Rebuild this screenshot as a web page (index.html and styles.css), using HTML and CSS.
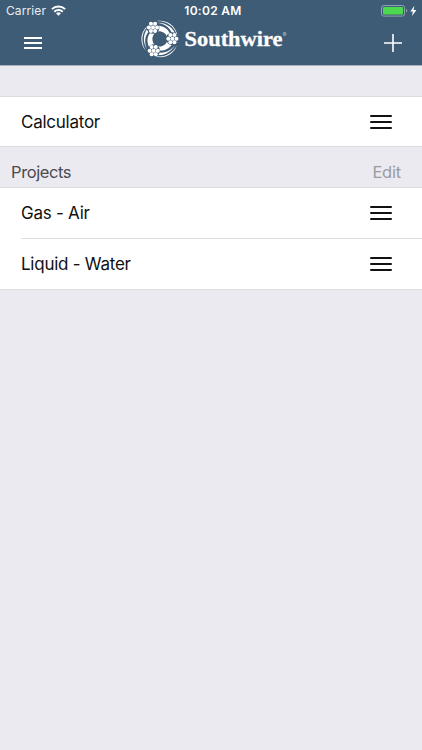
FILE: index.html
```html
<!DOCTYPE html>
<html lang="en">

<head>
    <meta charset="UTF-8">
    <meta name="viewport" content="width=device-width, initial-scale=1.0">
    <title>Southwire</title>
    <link rel="stylesheet" href="styles.css">
</head>

<body>
    <header class="header">
        <div class="status">
            <div class="carrier">
                <span>Carrier</span>
                <svg width="15" height="11" viewBox="0 0 15 11" fill="none" stroke="#fff" stroke-width="2">
                    <path d="M.9 4.1a9.4 9.4 0 0 1 13.2 0" />
                    <path d="M3.3 6.7a6 6 0 0 1 8.4 0" />
                    <path d="M7.5 10.8 5.1 8.4a3.4 3.4 0 0 1 4.8 0z" fill="#fff" stroke="none" />
                </svg>
            </div>
            <div class="time">10:02 AM</div>
            <div class="battery">
                <svg width="37" height="12" viewBox="0 0 37 12">
                    <rect x=".5" y=".5" width="23" height="10.6" rx="2.2" fill="none" stroke="#92a4b3" />
                    <rect x="2" y="2" width="20" height="7.6" rx="1" fill="#4cd84f" />
                    <path d="M25 4.1q1.3.5 1.3 1.7T25 7.5z" fill="#92a4b3" />
                    <path d="M33.4.8 29.3 6.6h2.6L31 11 35.4 5h-2.8z" fill="#fff" />
                </svg>
            </div>
        </div>
        <nav class="nav">
            <button class="menuBtn" aria-label="Menu">
                <span></span>
                <span></span>
                <span></span>
            </button>
            <svg class="logo" width="150" height="40" viewBox="0 0 150 40">
                <defs>
                    <g id="cluster">
                        <circle r="6.4" fill="#3e5c76" />
                        <g fill="#fff">
                            <circle r="2" />
                            <circle cx="4.1" r="2" />
                            <circle cx="-4.1" r="2" />
                            <circle cx="2.05" cy="3.6" r="2" />
                            <circle cx="-2.05" cy="3.6" r="2" />
                            <circle cx="2.05" cy="-3.6" r="2" />
                            <circle cx="-2.05" cy="-3.6" r="2" />
                        </g>
                    </g>
                    <!-- one third of the ring: three strands leaving a cluster -->
                    <g id="strand" fill="#fff">
                        <path d="M-3-18C9-20 18.2-11 18.2 1L17-4C14.5-13 7-18-3-18z" />
                        <path d="M-3-16.3C8-16.5 14.5-10 16-3L12.5-5C10-12 5-15.3-3-16.3z" />
                        <path d="M-2-13.5C6-12.5 9.5-8.5 11-3L7.5-1C6.5-6 2-8.2-3-7.5z" />
                    </g>
                </defs>
                <g transform="translate(19.8 20)">
                    <use href="#strand" />
                    <use href="#strand" transform="rotate(120)" />
                    <use href="#strand" transform="rotate(240)" />
                    <use href="#cluster" x="-6.8" y="-11.6" />
                    <use href="#cluster" x="12.6" y="-.3" />
                    <use href="#cluster" x="-6.1" y="11.7" />
                </g>
                <text class="brand" x="44.5" y="27" textLength="98" lengthAdjust="spacingAndGlyphs">Southwire</text>
                <text class="reg" x="142.6" y="17.5">®</text>
            </svg>
            <button class="addBtn" aria-label="Add">
                <svg width="18" height="18" viewBox="0 0 18 18" stroke="#fff" stroke-width="1.6">
                    <path d="M9 0v18M0 9h18" />
                </svg>
            </button>
        </nav>
    </header>

    <main>
        <ul class="list first">
            <li class="row">
                <span class="name">Calculator</span>
                <span class="handle"><i></i><i></i><i></i></span>
            </li>
        </ul>
        <div class="section">
            <span class="title">Projects</span>
            <button class="editBtn">Edit</button>
        </div>
        <ul class="list">
            <li class="row">
                <span class="name">Gas - Air</span>
                <span class="handle"><i></i><i></i><i></i></span>
            </li>
            <li class="row">
                <span class="name">Liquid - Water</span>
                <span class="handle"><i></i><i></i><i></i></span>
            </li>
        </ul>
    </main>
</body>

</html>
```
FILE: styles.css
```css
* {
    box-sizing: border-box;
}

body {
    margin: 0;
    min-height: 750px;
    background-color: #ebeaf0;
    font-family: Inter, "Liberation Sans", sans-serif;
}

button {
    background: none;
    border: none;
    padding: 0;
    font-family: inherit;
}

svg {
    display: block;
}

.header {
    height: 66px;
    background-color: #3e5c76;
    border-bottom: 1px solid #a9b3c1;
    color: #fff;
}

.status {
    display: grid;
    grid-template-columns: 1fr auto 1fr;
    height: 20px;
    padding: 1px 4px 0 6px;
    align-items: center;
    font-size: 12px;
}

.carrier {
    display: flex;
    align-items: center;
    gap: 5px;
    color: #e9eef2;
    letter-spacing: 0.1px;
}

.time {
    font-weight: 600;
    letter-spacing: 0.3px;
    padding-left: 2px;
}

.battery {
    justify-self: end;
}

.nav {
    display: flex;
    justify-content: space-between;
    align-items: center;
    height: 45px;
    padding: 0 20px 0 24px;
}

.menuBtn {
    display: flex;
    flex-direction: column;
    gap: 3px;
    width: 18px;
}

.menuBtn span {
    height: 2px;
    background-color: #fff;
}

.logo {
    margin: -7px 0 0 3px;
}

.brand {
    font-family: "Liberation Serif", serif;
    font-weight: bold;
    font-size: 22px;
    fill: #fff;
    stroke: #fff;
    stroke-width: 0.3px;
}

.reg {
    font-size: 6px;
    fill: #b5c1cc;
}

.list {
    margin: 0;
    padding: 0 0 0 21px;
    list-style: none;
    background-color: #fff;
    border-top: 1px solid #dcdbe0;
    border-bottom: 1px solid #dcdbe0;
}

.first {
    margin-top: 30px;
}

.row {
    display: flex;
    justify-content: space-between;
    align-items: center;
    height: 50px;
    padding-right: 30px;
}

.first .row {
    height: 49px;
}

.row + .row {
    height: 51px;
    border-top: 1px solid #dfdfe2;
}

.name {
    font-size: 17px;
    letter-spacing: -0.25px;
    color: #111;
}

.handle {
    display: flex;
    flex-direction: column;
    gap: 4px;
    width: 22px;
}

.handle i {
    height: 2px;
    background-color: #111;
    border-radius: 1px;
}

.section {
    display: flex;
    justify-content: space-between;
    align-items: flex-end;
    height: 40px;
    padding: 0 21px 5px 11px;
}

.title,
.editBtn {
    font-size: 16.5px;
    line-height: 20px;
    letter-spacing: -0.4px;
    color: #4b4b50;
}

.editBtn {
    letter-spacing: -0.2px;
    color: #9c9ba1;
}
```
